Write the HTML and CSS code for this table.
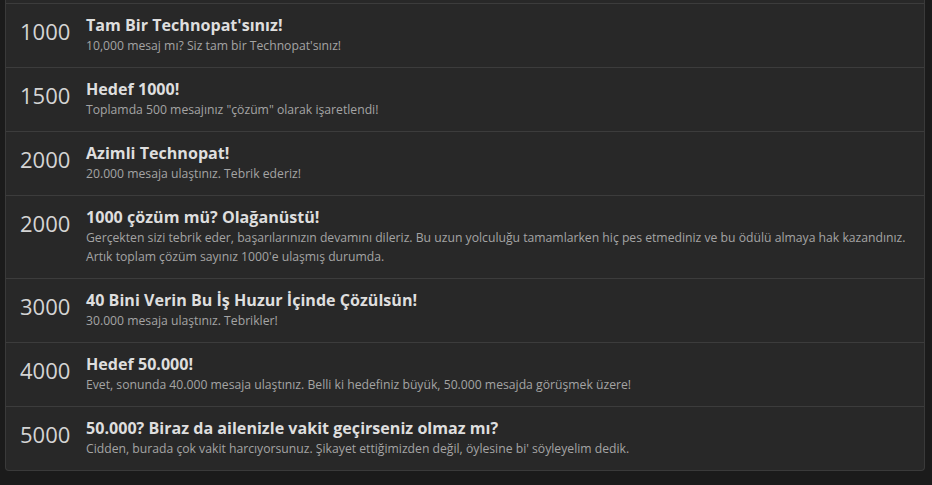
FILE: index.html
```html
<!DOCTYPE html>
<html lang="tr">
<head>
    <meta charset="UTF-8">
    <meta name="viewport" content="width=device-width, initial-scale=1.0">
    <title>Ödüller</title>
    <link rel="stylesheet" href="styles.css">
</head>
<body>
    <!-- Ödül listesi -->
    <div class="block">
        <ol class="trophy-list">
            <li class="trophy">
                <span class="trophy-points">1000</span>
                <div class="trophy-main">
                    <h3 class="trophy-title">Tam Bir Technopat'sınız!</h3>
                    <div class="trophy-desc">10,000 mesaj mı? Siz tam bir Technopat'sınız!</div>
                </div>
            </li>
            <li class="trophy">
                <span class="trophy-points">1500</span>
                <div class="trophy-main">
                    <h3 class="trophy-title">Hedef 1000!</h3>
                    <div class="trophy-desc">Toplamda 500 mesajınız "çözüm" olarak işaretlendi!</div>
                </div>
            </li>
            <li class="trophy">
                <span class="trophy-points">2000</span>
                <div class="trophy-main">
                    <h3 class="trophy-title">Azimli Technopat!</h3>
                    <div class="trophy-desc">20.000 mesaja ulaştınız. Tebrik ederiz!</div>
                </div>
            </li>
            <li class="trophy">
                <span class="trophy-points">2000</span>
                <div class="trophy-main">
                    <h3 class="trophy-title">1000 çözüm mü? Olağanüstü!</h3>
                    <div class="trophy-desc">Gerçekten sizi tebrik eder, başarılarınızın devamını dileriz. Bu uzun yolculuğu tamamlarken hiç pes etmediniz ve bu ödülü almaya hak kazandınız. Artık toplam çözüm sayınız 1000'e ulaşmış durumda.</div>
                </div>
            </li>
            <li class="trophy">
                <span class="trophy-points">3000</span>
                <div class="trophy-main">
                    <h3 class="trophy-title">40 Bini Verin Bu İş Huzur İçinde Çözülsün!</h3>
                    <div class="trophy-desc">30.000 mesaja ulaştınız. Tebrikler!</div>
                </div>
            </li>
            <li class="trophy">
                <span class="trophy-points">4000</span>
                <div class="trophy-main">
                    <h3 class="trophy-title">Hedef 50.000!</h3>
                    <div class="trophy-desc">Evet, sonunda 40.000 mesaja ulaştınız. Belli ki hedefiniz büyük, 50.000 mesajda görüşmek üzere!</div>
                </div>
            </li>
            <li class="trophy">
                <span class="trophy-points">5000</span>
                <div class="trophy-main">
                    <h3 class="trophy-title">50.000? Biraz da ailenizle vakit geçirseniz olmaz mı?</h3>
                    <div class="trophy-desc">Cidden, burada çok vakit harcıyorsunuz. Şikayet ettiğimizden değil, öylesine bi' söyleyelim dedik.</div>
                </div>
            </li>
        </ol>
    </div>
</body>
</html>
```

FILE: styles.css
```css
/* temel */
* {
    margin: 0;
    padding: 0;
    box-sizing: border-box;
}

body {
    background: #1b1b1b;
    font-family: 'Open Sans', 'Noto Sans', sans-serif;
    color: #d8d8d8;
    padding: 0 7px 14px 5px;
}

/* blok */
.block {
    background: #282828;
    border: 1px solid #3a3a3a;
    border-top: none;
    border-radius: 0 0 4px 4px;
    padding-top: 3px;
}

.trophy-list {
    list-style: none;
}

.trophy {
    display: flex;
    align-items: flex-start;
    border-top: 1px solid #3c3c3c;
    padding: 10px 10px 12px 14px;
}

.trophy-points {
    width: 66px;
    flex-shrink: 0;
    font-size: 22px;
    line-height: 34px;
    color: #d4d4d4;
}

.trophy-main {
    flex: 1;
    min-width: 0;
}

.trophy-title {
    font-size: 16.1px;
    font-weight: 700;
    line-height: 22px;
    color: #dedede;
}

.trophy-desc {
    font-size: 12.2px;
    line-height: 19px;
    color: #a4a4a4;
}
```
